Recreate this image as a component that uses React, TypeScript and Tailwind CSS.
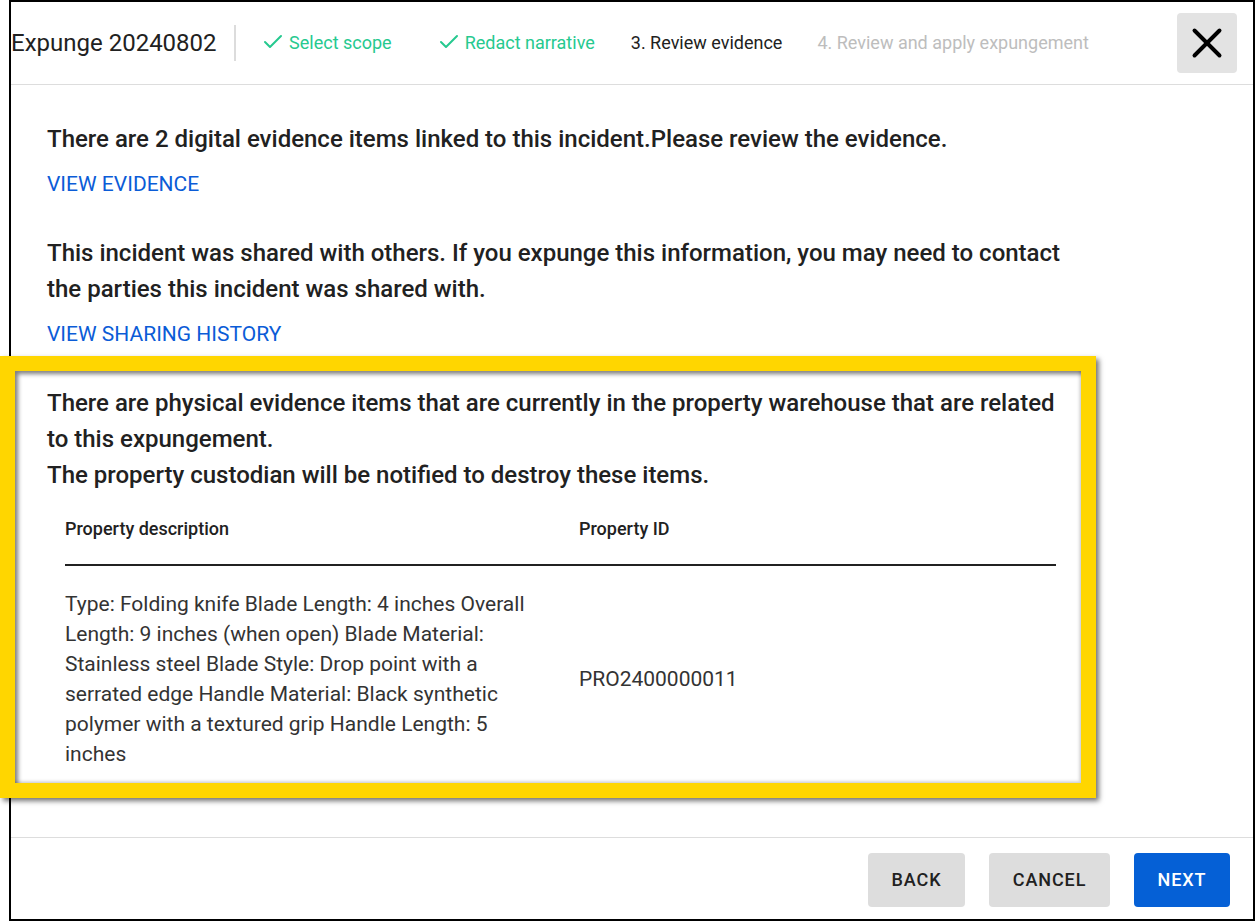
import React from 'react'
import { X, Check } from 'lucide-react'

const Step = ({ label }: { label: string }) => (
  <div className="flex items-center gap-[4px] text-[#26c98f]">
    <Check className="w-[24px] h-[24px]" strokeWidth={2} />
    <span>{label}</span>
  </div>
)

const App = () => {
  return (
    <div className="w-[1255px] h-[921px] bg-white overflow-hidden font-['Roboto',sans-serif] text-[#212121]">
      <div className="relative flex flex-col h-full ml-[9px] border-2 border-black">
        <header className="flex items-center h-[83px] shrink-0 border-b border-[#dddddd]">
          <h1 className="text-[24px] leading-none">Expunge 20240802</h1>
          <div className="w-[2px] h-[36px] ml-[17px] bg-[#dcdcdc]" />
          <div className="flex items-center gap-[45px] ml-[25.5px] mb-[2px] text-[18px]">
            <Step label="Select scope" />
            <Step label="Redact narrative" />
          </div>
          <span className="ml-[36px] mb-[2px] text-[18px]">3. Review evidence</span>
          <span className="ml-[35px] mb-[2px] text-[18px] text-[#bdbdbd]">4. Review and apply expungement</span>
          <button className="flex items-center justify-center w-[60px] h-[60px] ml-auto mr-[16px] rounded-[4px] bg-[#e3e3e3]">
            <X className="w-[50px] h-[50px] text-black" strokeWidth={1.9} />
          </button>
        </header>

        <main className="flex-1 pt-[36px] pl-[36px] text-[24px] leading-[36px] font-medium">
          <p>There are 2 digital evidence items linked to this incident.Please review the evidence.</p>
          <a className="block mt-[9px] text-[21px] font-normal text-[#0b5cd7]">VIEW EVIDENCE</a>
          <p className="w-[1030px] mt-[33px]">
            This incident was shared with others. If you expunge this information, you may need to contact the parties
            this incident was shared with.
          </p>
          <a className="block mt-[9px] text-[21px] font-normal text-[#0b5cd7]">VIEW SHARING HISTORY</a>
        </main>

        <section className="absolute left-[-11px] top-[354px] w-[1096px] h-[442px] pt-[14px] pl-[32px] bg-white border-[15px] border-[#ffd600] shadow-[3px_3px_5px_rgba(0,0,0,0.55)] text-[24px] leading-[36px] font-medium">
          <div className="absolute inset-0 shadow-[inset_3px_3px_4px_rgba(0,0,0,0.5),inset_-2px_-2px_3px_rgba(0,0,0,0.15)] pointer-events-none" />
          <p>
            There are physical evidence items that are currently in the property warehouse that are related to this
            expungement.
            <br />
            The property custodian will be notified to destroy these items.
          </p>
          <table className="w-[991px] ml-[18px] mt-px font-normal text-[21px] leading-[30px] text-[#333333] border-collapse">
            <thead>
              <tr className="border-b-2 border-[#212121] text-[18px] text-[#212121] font-medium text-left">
                <th className="h-[71px] w-[514px] pb-[1px] font-medium">Property description</th>
                <th className="h-[71px] pb-[1px] font-medium">Property ID</th>
              </tr>
            </thead>
            <tbody>
              <tr>
                <td className="pt-[23px] pr-[40px]">
                  Type: Folding knife Blade Length: 4 inches Overall Length: 9 inches (when open) Blade Material:
                  Stainless steel Blade Style: Drop point with a serrated edge Handle Material: Black synthetic polymer
                  with a textured grip Handle Length: 5 inches
                </td>
                <td className="pt-[23px]">PRO2400000011</td>
              </tr>
            </tbody>
          </table>
        </section>

        <footer className="flex justify-end items-center gap-[24px] h-[82px] shrink-0 pt-[3px] pr-[23px] border-t border-[#dddddd] text-[18px] font-medium tracking-[0.9px]">
          <button className="w-[97px] h-[54px] pb-[2px] rounded-[4px] bg-[#dddddd]">BACK</button>
          <button className="w-[121px] h-[54px] pb-[2px] rounded-[4px] bg-[#dddddd]">CANCEL</button>
          <button className="w-[96px] h-[54px] pb-[2px] rounded-[4px] bg-[#0560d6] text-white">NEXT</button>
        </footer>
      </div>
    </div>
  )
}

export default App
